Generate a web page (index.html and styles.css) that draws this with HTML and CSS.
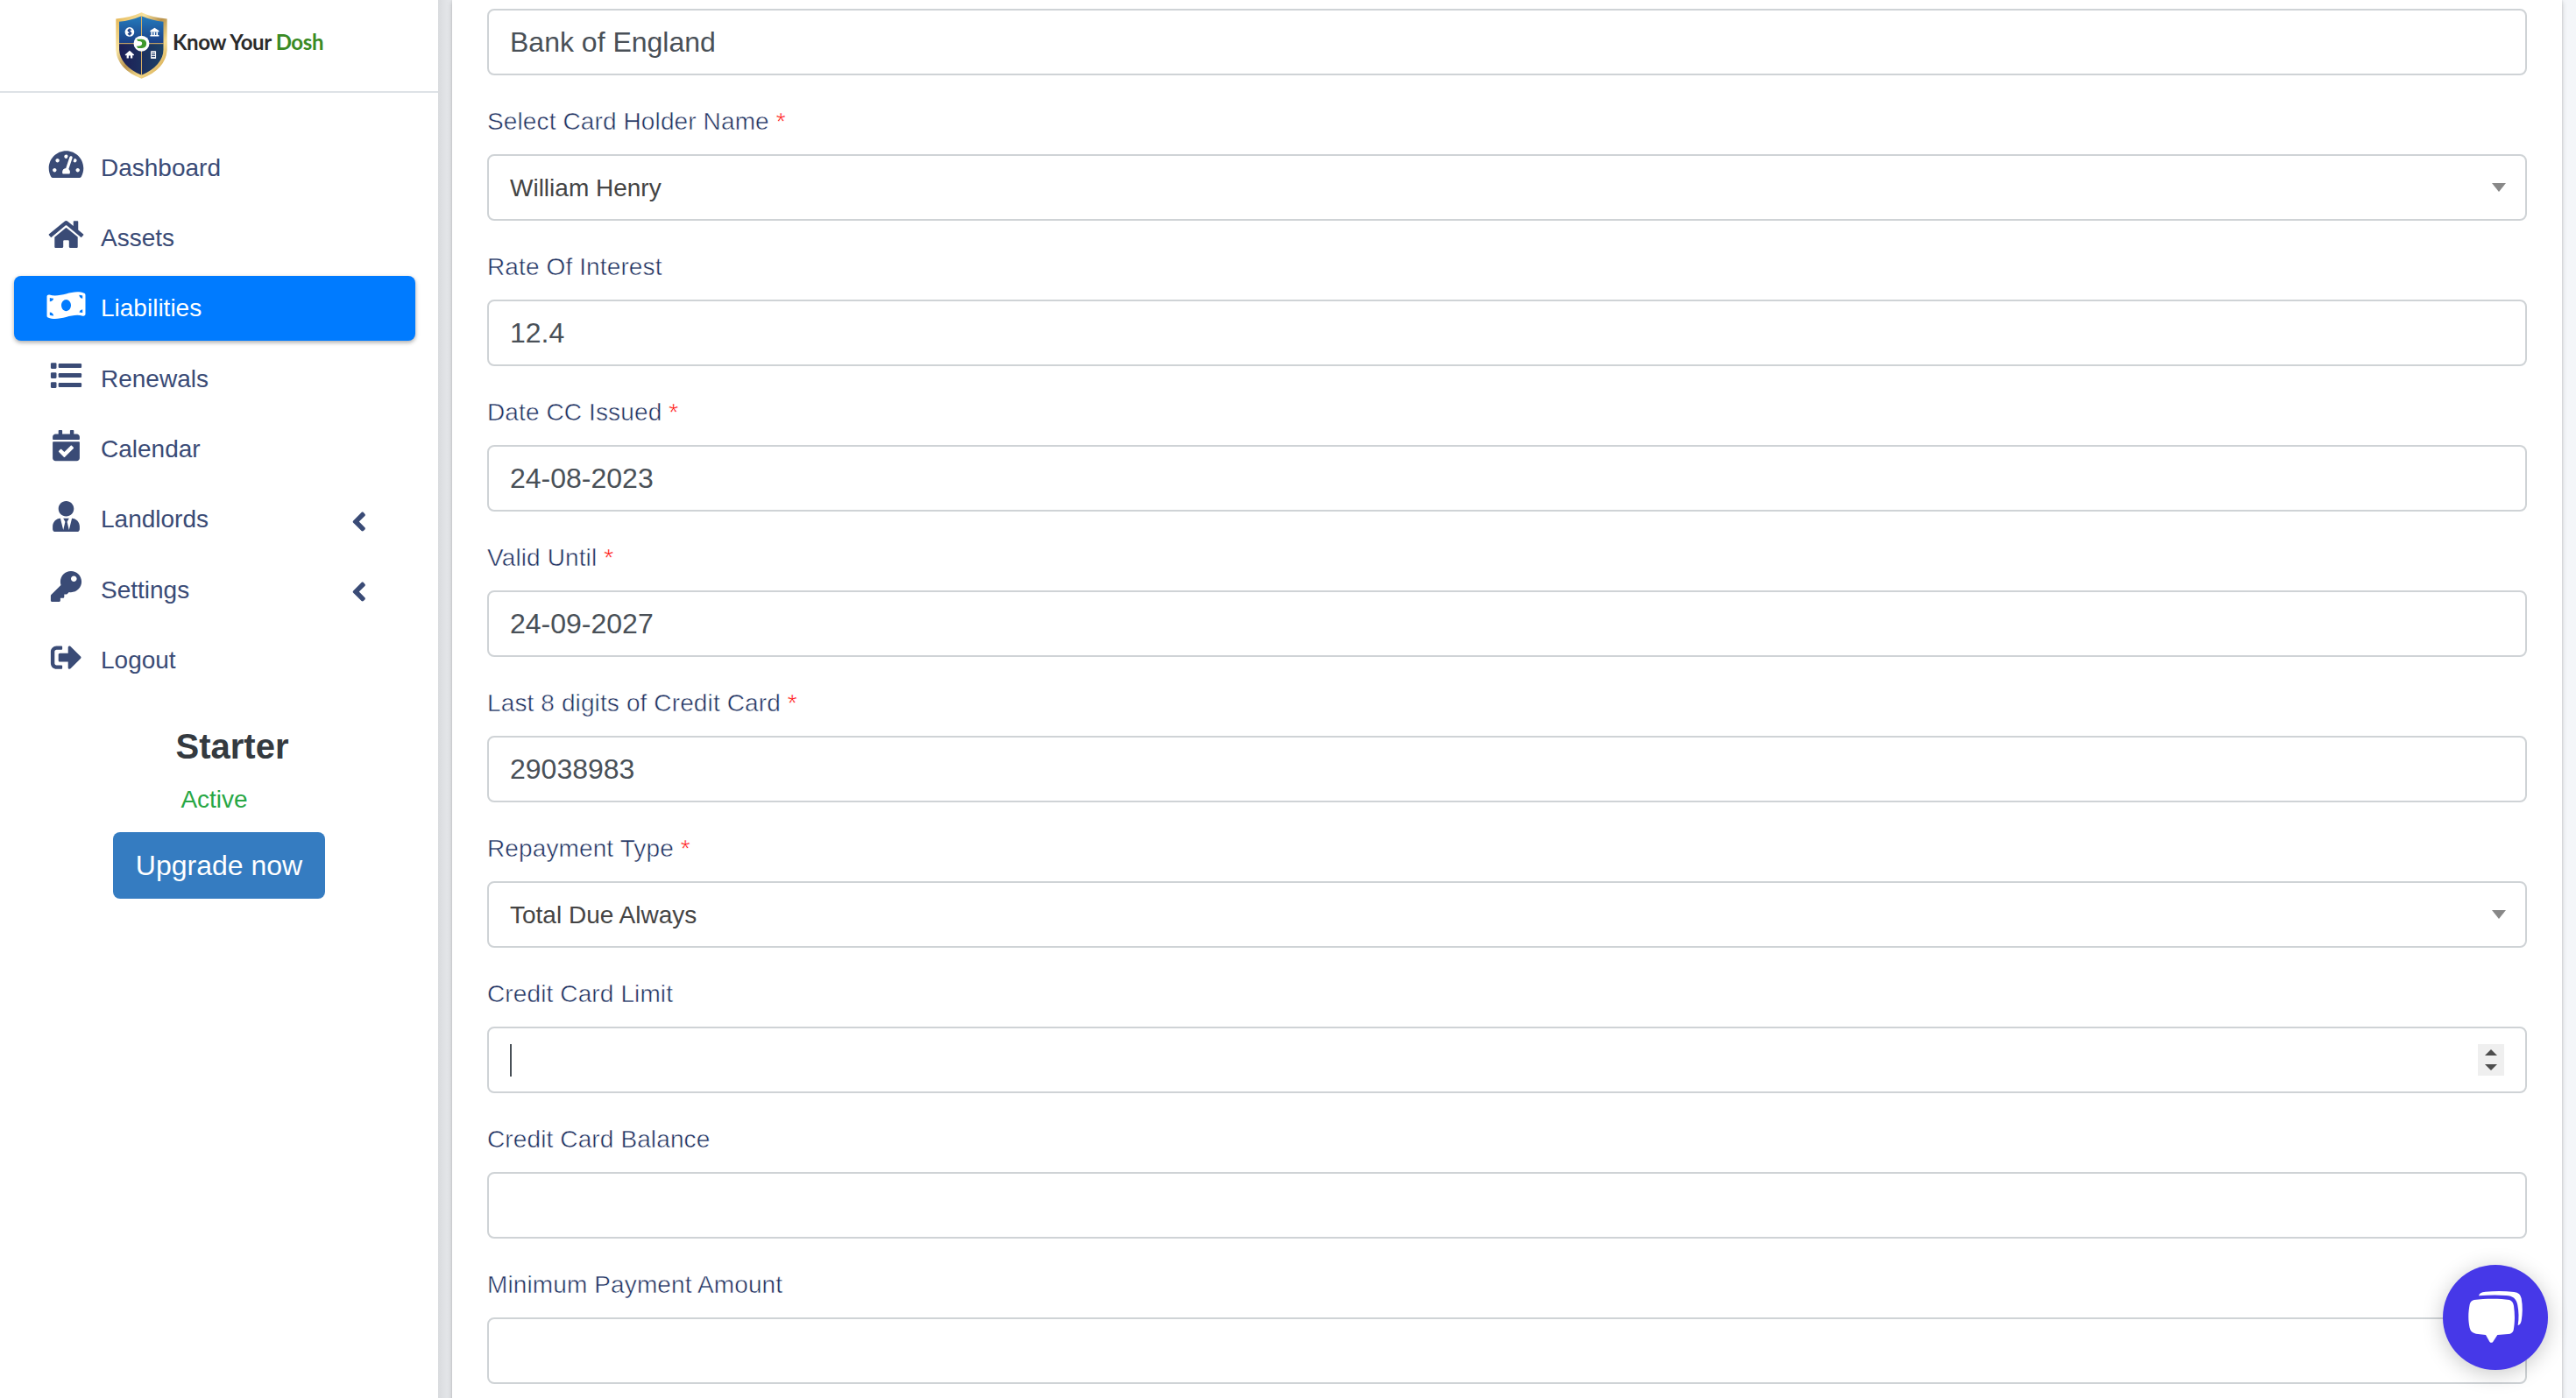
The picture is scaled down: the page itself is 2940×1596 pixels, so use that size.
FILE: index.html
```
<!DOCTYPE html>
<html lang="en">
<head>
    <meta charset="UTF-8">
    <meta name="viewport" content="width=device-width, initial-scale=1.0">
    <title>Know Your Dosh</title>
    <link rel="stylesheet" href="styles.css">
</head>
<body>
    <aside class="sidebar">
        <a class="brand">
            <svg class="brand-logo" viewBox="96 42 178 228">
                <defs>
                    <linearGradient id="gold" x1="0" y1="0" x2="1" y2="1">
                        <stop offset="0" stop-color="#e2b04a"/>
                        <stop offset=".3" stop-color="#f7e3a0"/>
                        <stop offset=".5" stop-color="#b8924c"/>
                        <stop offset=".7" stop-color="#f3d98c"/>
                        <stop offset="1" stop-color="#c99535"/>
                    </linearGradient>
                    <linearGradient id="blue" x1="0" y1="0" x2="0" y2="1">
                        <stop offset="0" stop-color="#2583c4"/>
                        <stop offset="1" stop-color="#1b3f86"/>
                    </linearGradient>
                    <linearGradient id="navy" x1="0" y1="0" x2="1" y2="0">
                        <stop offset="0" stop-color="#1d1c55"/>
                        <stop offset="1" stop-color="#1c4468"/>
                    </linearGradient>
                    <clipPath id="shield">
                        <path d="M185 54Q222 70 261 74V170Q258 225 185 258Q112 225 108 170V74Q148 70 185 54z"/>
                    </clipPath>
                </defs>
                <path fill="url(#gold)" d="M185 42Q225 60 273 64V172Q268 238 185 270Q102 238 97 172V64Q145 60 185 42z"/>
                <g clip-path="url(#shield)">
                    <rect x="96" y="42" width="178" height="107" fill="url(#blue)"/>
                    <rect x="96" y="149" width="178" height="121" fill="url(#navy)"/>
                </g>
                <path stroke="#d9b065" stroke-width="3" d="M185 54V258M108 149H261"/>
                <circle cx="185" cy="149" r="27" fill="#fff"/>
                <path fill="#3f9a2c" d="M168 134h18q16 1 16 15t-16 16h-13l-6-7q20 1 20-9t-14-8z"/>
                <circle cx="144" cy="109" r="16" fill="#fff"/>
                <path fill="none" stroke="#1b3f86" stroke-width="4" d="M150 103q-6-4-10-1t4 7 4 7-10-1M144 97v24"/>
                <path fill="#fff" d="M215 105l15-10 15 10v4h-30zM218 110h5v10h-5zM227 110h5v10h-5zM236 110h5v10h-5zM215 120h30v4h-30z"/>
                <path fill="#fff" d="M128 188l16-15 16 15-3 3-3-2v11h-7v-9h-6v9h-7v-11l-3 2z"/>
                <path fill="#fff" d="M217 175h18v26h-18z"/>
                <path stroke="#1c3a68" stroke-width="3" d="M220 182h12M220 188h12M220 194h12"/>
            </svg>
            <span class="brand-text">Know Your <span class="brand-accent">Dosh</span></span>
        </a>

        <nav class="nav">
            <a class="nav-link">
                <svg class="nav-icon" viewBox="0 0 576 512"><path d="M288 32C128.94 32 0 160.94 0 320c0 52.8 14.25 102.26 39.06 144.8 5.61 9.62 16.3 15.2 27.44 15.2h443c11.14 0 21.83-5.58 27.44-15.2C561.75 422.26 576 372.8 576 320c0-159.06-128.94-288-288-288zm0 64c14.71 0 26.58 10.13 30.32 23.65-1.11 2.26-2.64 4.23-3.45 6.67l-9.22 27.67c-5.13 3.49-10.97 6.01-17.64 6.01-17.67 0-32-14.33-32-32S270.33 96 288 96zM96 384c-17.67 0-32-14.33-32-32s14.33-32 32-32 32 14.33 32 32-14.33 32-32 32zm48-160c-17.67 0-32-14.33-32-32s14.33-32 32-32 32 14.33 32 32-14.33 32-32 32zm246.77-72.41l-61.33 184C343.13 347.33 352 364.54 352 384c0 11.72-3.38 22.55-8.88 32H232.88c-5.5-9.45-8.88-20.28-8.88-32 0-33.94 26.5-61.43 59.9-63.59l61.34-184.01c4.17-12.56 17.73-19.45 30.36-15.17 12.57 4.19 19.35 17.79 15.17 30.36zm14.66 57.2l15.52-46.55c3.47-1.29 7.13-2.23 11.05-2.23 17.67 0 32 14.33 32 32s-14.33 32-32 32c-11.38-.01-20.89-6.28-26.57-15.22zM480 384c-17.67 0-32-14.33-32-32s14.33-32 32-32 32 14.33 32 32-14.33 32-32 32z"/></svg>
                <span class="nav-text">Dashboard</span>
            </a>
            <a class="nav-link">
                <svg class="nav-icon" viewBox="0 0 576 512"><path d="M280.37 148.26L96 300.11V464a16 16 0 0 0 16 16l112.06-.29a16 16 0 0 0 15.92-16V368a16 16 0 0 1 16-16h64a16 16 0 0 1 16 16v95.64a16 16 0 0 0 16 16.05L464 480a16 16 0 0 0 16-16V300L295.67 148.26a12.19 12.19 0 0 0-15.3 0zM571.6 251.47L488 182.56V44.05a12 12 0 0 0-12-12h-56a12 12 0 0 0-12 12v72.61L318.47 43a48 48 0 0 0-61 0L4.34 251.47a12 12 0 0 0-1.6 16.9l25.5 31A12 12 0 0 0 45.15 301l235.22-193.74a12.19 12.19 0 0 1 15.3 0L530.9 301a12 12 0 0 0 16.9-1.6l25.5-31a12 12 0 0 0-1.7-16.93z"/></svg>
                <span class="nav-text">Assets</span>
            </a>
            <a class="nav-link active">
                <svg class="nav-icon" viewBox="0 0 640 512"><path d="M621.16 54.46C582.37 38.19 543.55 32 504.75 32c-123.17-.01-246.33 62.34-369.5 62.34-30.89 0-61.76-3.92-92.65-13.72-3.47-1.1-6.95-1.62-10.35-1.62C15.04 79 0 92.32 0 110.81v317.26c0 12.63 7.23 24.6 18.84 29.46C57.63 473.81 96.45 480 135.25 480c123.17 0 246.34-62.35 369.51-62.35 30.89 0 61.76 3.92 92.65 13.72 3.47 1.1 6.95 1.62 10.35 1.62 17.21 0 32.25-13.32 32.25-31.81V83.93c-.01-12.64-7.24-24.6-18.85-29.47zM48 132.22c20.12 5.04 41.12 7.57 62.72 8.93C104.84 170.54 79 192.69 48 192.69v-60.47zm0 285v-47.78c34.37 0 62.18 27.27 63.71 61.4-22.53-1.81-43.59-6.31-63.71-13.62zM320 352c-44.19 0-80-42.99-80-96 0-53.02 35.82-96 80-96s80 42.98 80 96c0 53.03-35.83 96-80 96zm272 27.78c-17.52-4.39-35.71-6.85-54.32-8.44 5.87-26.08 27.5-45.88 54.32-49.28v57.72zm0-236.11c-30.89-3.91-54.86-29.7-55.81-61.55 19.54 2.17 38.09 6.23 55.81 12.66v48.89z"/></svg>
                <span class="nav-text">Liabilities</span>
            </a>
            <a class="nav-link">
                <svg class="nav-icon" viewBox="0 0 512 512">
                    <rect x="0" y="48" width="96" height="96" rx="16"/><rect x="128" y="60" width="384" height="72" rx="16"/>
                    <rect x="0" y="208" width="96" height="96" rx="16"/><rect x="128" y="220" width="384" height="72" rx="16"/>
                    <rect x="0" y="368" width="96" height="96" rx="16"/><rect x="128" y="380" width="384" height="72" rx="16"/>
                </svg>
                <span class="nav-text">Renewals</span>
            </a>
            <a class="nav-link">
                <svg class="nav-icon" viewBox="0 0 448 512"><path d="M436 160H12c-6.627 0-12-5.373-12-12v-36c0-26.51 21.49-48 48-48h48V12c0-6.627 5.373-12 12-12h40c6.627 0 12 5.373 12 12v52h128V12c0-6.627 5.373-12 12-12h40c6.627 0 12 5.373 12 12v52h48c26.51 0 48 21.49 48 48v36c0 6.627-5.373 12-12 12zM12 192h424c6.627 0 12 5.373 12 12v260c0 26.51-21.49 48-48 48H48c-26.51 0-48-21.49-48-48V204c0-6.627 5.373-12 12-12zm333.296 95.947l-28.169-28.398c-4.667-4.705-12.265-4.736-16.97-.068L194.12 364.665l-45.98-46.352c-4.667-4.705-12.266-4.736-16.971-.068l-28.397 28.17c-4.705 4.667-4.736 12.265-.068 16.97l82.601 83.269c4.667 4.705 12.265 4.736 16.97.068l142.953-141.805c4.705-4.667 4.736-12.265.068-16.97z"/></svg>
                <span class="nav-text">Calendar</span>
            </a>
            <a class="nav-link">
                <svg class="nav-icon" viewBox="0 0 448 512"><path d="M224 256c70.7 0 128-57.3 128-128S294.7 0 224 0 96 57.3 96 128s57.3 128 128 128zm95.8 32.6L272 480l-32-136 32-56h-96l32 56-32 136-47.8-191.4C56.9 292 0 350.3 0 422.4V464c0 26.5 21.5 48 48 48h352c26.5 0 48-21.5 48-48v-41.6c0-72.1-56.9-130.4-128.2-133.8z"/></svg>
                <span class="nav-text">Landlords</span>
                <svg class="nav-arrow" viewBox="0 0 256 512"><path d="M31.7 239l136-136c9.4-9.4 24.6-9.4 33.9 0l22.6 22.6c9.4 9.4 9.4 24.6 0 33.9L127.9 256l96.4 96.4c9.4 9.4 9.4 24.6 0 33.9L201.7 409c-9.4 9.4-24.6 9.4-33.9 0l-136-136c-9.5-9.4-9.5-24.6-.1-34z"/></svg>
            </a>
            <a class="nav-link">
                <svg class="nav-icon" viewBox="0 0 512 512"><path d="M512 176.001C512 273.203 433.202 352 336 352c-11.22 0-22.19-1.062-32.827-3.069l-24.012 27.014A23.999 23.999 0 0 1 261.223 384H224v40c0 13.255-10.745 24-24 24h-40v40c0 13.255-10.745 24-24 24H24c-13.255 0-24-10.745-24-24v-78.059c0-6.365 2.529-12.47 7.029-16.971l161.802-161.802C163.108 213.814 160 195.271 160 176 160 78.798 238.797.001 335.999 0 433.488-.001 512 78.511 512 176.001zM336 128c0 26.51 21.49 48 48 48s48-21.49 48-48-21.49-48-48-48-48 21.49-48 48z"/></svg>
                <span class="nav-text">Settings</span>
                <svg class="nav-arrow" viewBox="0 0 256 512"><path d="M31.7 239l136-136c9.4-9.4 24.6-9.4 33.9 0l22.6 22.6c9.4 9.4 9.4 24.6 0 33.9L127.9 256l96.4 96.4c9.4 9.4 9.4 24.6 0 33.9L201.7 409c-9.4 9.4-24.6 9.4-33.9 0l-136-136c-9.5-9.4-9.5-24.6-.1-34z"/></svg>
            </a>
            <a class="nav-link">
                <svg class="nav-icon" viewBox="0 0 512 512"><path d="M497 273L329 441c-15 15-41 4.5-41-17v-96H152c-13.3 0-24-10.7-24-24v-96c0-13.3 10.7-24 24-24h136V88c0-21.4 25.9-32 41-17l168 168c9.3 9.4 9.3 24.6 0 34zM192 436v-40c0-6.6-5.4-12-12-12H96c-17.7 0-32-14.3-32-32V160c0-17.7 14.3-32 32-32h84c6.6 0 12-5.4 12-12V76c0-6.6-5.4-12-12-12H96c-53 0-96 43-96 96v192c0 53 43 96 96 96h84c6.6 0 12-5.4 12-12z"/></svg>
                <span class="nav-text">Logout</span>
            </a>
        </nav>

        <div class="plan">
            <h3 class="plan-name">Starter</h3>
            <p class="plan-status">Active</p>
            <button class="btn-upgrade" type="button">Upgrade now</button>
        </div>
    </aside>

    <main class="content">
        <form class="card">
            <div class="form-group">
                <input class="form-control" type="text" value="Bank of England">
            </div>
            <div class="form-group">
                <label>Select Card Holder Name <span class="required">*</span></label>
                <div class="form-control select"><span>William Henry</span><i class="caret-down"></i></div>
            </div>
            <div class="form-group">
                <label>Rate Of Interest</label>
                <input class="form-control" type="text" value="12.4">
            </div>
            <div class="form-group">
                <label>Date CC Issued <span class="required">*</span></label>
                <input class="form-control" type="text" value="24-08-2023">
            </div>
            <div class="form-group">
                <label>Valid Until <span class="required">*</span></label>
                <input class="form-control" type="text" value="24-09-2027">
            </div>
            <div class="form-group">
                <label>Last 8 digits of Credit Card <span class="required">*</span></label>
                <input class="form-control" type="text" value="29038983">
            </div>
            <div class="form-group">
                <label>Repayment Type <span class="required">*</span></label>
                <div class="form-control select"><span>Total Due Always</span><i class="caret-down"></i></div>
            </div>
            <div class="form-group">
                <label>Credit Card Limit</label>
                <div class="form-control number">
                    <i class="text-cursor"></i>
                    <span class="spinner"><i class="spin-up"></i><i class="spin-down"></i></span>
                </div>
            </div>
            <div class="form-group">
                <label>Credit Card Balance</label>
                <input class="form-control" type="text">
            </div>
            <div class="form-group">
                <label>Minimum Payment Amount</label>
                <input class="form-control" type="text">
            </div>
        </form>
    </main>

    <button class="chat-button" type="button" aria-label="Chat">
        <svg viewBox="444 912 360 360">
            <path d="M567 1018Q568 1006 590 1004C625 1001 655 1001 688 1005Q710 1008 713 1027C718 1055 717 1080 713 1103Q710 1117 701 1119C705 1095 704 1072 700 1050C696 1028 684 1018 660 1017C630 1014 600 1015 567 1018z"/>
            <path d="M551 1032C590 1027 640 1027 672 1032Q684 1036 687 1052C691 1080 691 1110 686 1136Q682 1148 668 1149L631 1152L616 1175Q610 1182 604 1175L591 1152L558 1148Q540 1145 536 1128C530 1100 531 1075 536 1048Q539 1035 551 1032z"/>
        </svg>
    </button>
</body>
</html>
```
FILE: styles.css
```
* {
    box-sizing: border-box;
}
body {
    display: flex;
    height: 1596px;
    margin: 0;
    overflow: hidden;
    font-family: "Liberation Sans", Arial, sans-serif;
    font-size: 28px;
    background-color: #f4f6f9;
}

/* Sidebar */
.sidebar {
    flex: none;
    width: 500px;
    background-color: #fff;
    color: #3a4b76;
}
.brand {
    display: flex;
    height: 106px;
    padding: 14px 0 0 132px;
    border-bottom: 2px solid #dee2e6;
}
.brand-logo {
    width: 59px;
    height: 76px;
}
.brand-text {
    margin: 19px 0 0 6px;
    font-family: Lato, sans-serif;
    font-size: 24px;
    font-weight: 700;
    line-height: 30px;
    letter-spacing: -0.4px;
    white-space: nowrap;
    color: #2b2b2b;
}
.brand-accent {
    color: #3a8a24;
}
.nav {
    display: flex;
    flex-direction: column;
    gap: 6.4px;
    padding: 48px 26px 0 16px;
}
.nav-link {
    display: flex;
    align-items: center;
    height: 74px;
    padding: 0 55px 0 34px;
    border-radius: 8px;
}
.nav-link.active {
    background-color: #007bff;
    color: #fff;
    box-shadow: 0 2px 6px rgba(0, 0, 0, 0.12), 0 2px 4px rgba(0, 0, 0, 0.24);
}
.nav-icon {
    width: 51px;
    height: 35.2px;
    margin-bottom: 7px;
    fill: currentColor;
}
.nav-text {
    flex: 1;
    padding: 1px 0 0 14px;
    line-height: 42px;
}
.nav-arrow {
    width: 17.6px;
    height: 35.2px;
    margin-top: 5px;
    fill: currentColor;
}
.plan {
    display: flex;
    flex-direction: column;
    align-items: center;
    padding-top: 37px;
}
.plan-name {
    margin: 0 0 16px 30px;
    font-size: 40px;
    line-height: 48px;
    color: #343a40;
}
.plan-status {
    margin: 0 11px 16px 0;
    line-height: 42px;
    color: #28a745;
}
.btn-upgrade {
    height: 76px;
    padding: 2px 26px 0;
    border: 0;
    border-radius: 8px;
    background-color: #357cc1;
    color: #fff;
    font-family: inherit;
    font-size: 32px;
}

/* Form */
.content {
    flex: 1;
    padding: 0 16px;
    background: linear-gradient(to right, #d9dbde, #e8eaed 16px, #f4f6f9 60px);
}
.card {
    height: 1640px;
    padding: 10px 40px;
    background-color: #fff;
    box-shadow: 0 0 2px rgba(0, 0, 0, 0.125), 0 2px 6px rgba(0, 0, 0, 0.2);
}
.form-group {
    margin-bottom: 32px;
}
label {
    display: block;
    margin-bottom: 16px;
    line-height: 42px;
    letter-spacing: 0.12px;
    color: #1f3261;
    /* thins the strokes, there is no light weight */
    -webkit-text-stroke: 0.5px #fff;
}
.required {
    color: #f00;
}
.form-control {
    display: block;
    width: 100%;
    height: 76px;
    padding: 1px 24px 0;
    border: 2px solid #cfd3d6;
    border-radius: 8px;
    background-color: #fff;
    color: #495057;
    font-family: inherit;
    font-size: 32px;
}
.select,
.number {
    display: flex;
    align-items: center;
    justify-content: space-between;
}
.select {
    padding-top: 2px;
    padding-right: 22px;
    font-size: 28px;
    color: #444;
}
.caret-down {
    border: 8px solid transparent;
    border-top: 10px solid #888;
    border-bottom: 0;
    margin-bottom: 3px;
}
.number {
    padding-top: 0;
}
.text-cursor {
    width: 2px;
    height: 37px;
    background-color: #495057;
}
.spinner {
    display: flex;
    flex-direction: column;
    align-items: center;
    justify-content: center;
    gap: 10px;
    width: 30px;
    height: 36px;
    background-color: #efefef;
}
.spin-up,
.spin-down {
    border: 7px solid transparent;
}
.spin-up {
    border-top: 0;
    border-bottom-color: #4d4d4d;
}
.spin-down {
    border-bottom: 0;
    border-top-color: #4d4d4d;
}

/* Chat widget */
.chat-button {
    position: absolute;
    right: 32px;
    bottom: 32px;
    width: 120px;
    height: 120px;
    padding: 0;
    border: 0;
    border-radius: 50%;
    background-color: #4638e8;
    box-shadow: 0 4px 24px rgba(0, 0, 0, 0.22);
}
.chat-button svg {
    display: block;
    width: 120px;
    height: 120px;
    fill: #fff;
}
```
